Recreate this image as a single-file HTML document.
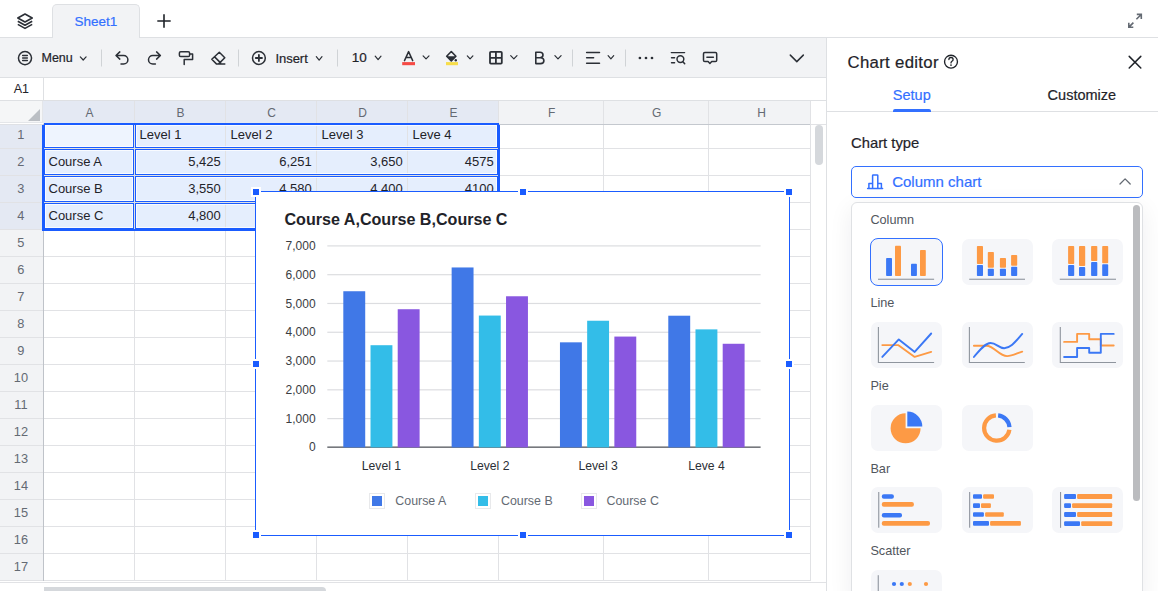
<!DOCTYPE html>
<html><head><meta charset="utf-8"><title>Sheet</title>
<style>
html,body{margin:0;padding:0;}
body{width:1158px;height:591px;overflow:hidden;position:relative;background:#fff;font-family:"Liberation Sans", sans-serif;}
div,svg{box-sizing:border-box;}
</style></head><body>
<div style="position:absolute;left:0px;top:37px;width:1158px;height:1px;background:#dee0e3"></div><svg style="position:absolute;left:15px;top:11px;" width="20" height="20" viewBox="0 0 20 20"><g fill="none" stroke="#2b2f36" stroke-width="1.6" stroke-linejoin="round"><path d="M10 3 L17.2 7 L10 11 L2.8 7 Z"/><path d="M2.8 10.2 L10 14.2 L17.2 10.2"/><path d="M2.8 13.4 L10 17.4 L17.2 13.4"/></g></svg><div style="position:absolute;left:52px;top:4px;width:88px;height:35px;background:#f2f3f5;border:1px solid #dee0e3;border-bottom:none;border-radius:5px 5px 0 0"></div><div style="position:absolute;left:74.5px;top:15.17px;font-size:13.5px;line-height:13.5px;color:#3370ff;font-weight:normal;white-space:nowrap;-webkit-text-stroke:0.2px currentColor;">Sheet1</div><svg style="position:absolute;left:155px;top:12px;" width="18" height="18" viewBox="0 0 18 18"><g stroke="#1f2329" stroke-width="1.6"><path d="M9 2.3 V15.7 M2.3 9 H15.7"/></g></svg><svg style="position:absolute;left:1126px;top:12px;" width="18" height="18" viewBox="0 0 18 18"><g fill="none" stroke="#646a73" stroke-width="1.6"><path d="M10.4 7.3 L15.2 2.5 M10.8 2.4 H15.3 V6.9"/><path d="M7.4 10.6 L2.9 15.1 M2.8 10.7 V15.2 H7.3"/></g></svg><div style="position:absolute;left:0px;top:38px;width:826px;height:39px;background:#f2f3f5"></div><div style="position:absolute;left:0px;top:77px;width:826px;height:1px;background:#dee0e3"></div><svg style="position:absolute;left:0;top:0" width="1158" height="591" viewBox="0 0 1158 591"><circle cx="25" cy="58.1" r="6.55" fill="none" stroke="#2b2f36" stroke-width="1.5"/><path d="M22.6 55.5 H27.4 M22.6 58 H27.4 M22.6 60.5 H27.4" fill="none" stroke="#2b2f36" stroke-width="1.3" stroke-linecap="round" stroke-linejoin="round" /><path d="M80.3 56.9 L83.19999999999999 60.0 L86.1 56.9" fill="none" stroke="#2b2f36" stroke-width="1.2" stroke-linecap="round" stroke-linejoin="round" /><rect x="101.0" y="49.5" width="1" height="17" fill="#d0d3d6"/><rect x="238.0" y="49.5" width="1" height="17" fill="#d0d3d6"/><rect x="337.0" y="49.5" width="1" height="17" fill="#d0d3d6"/><rect x="572.0" y="49.5" width="1" height="17" fill="#d0d3d6"/><rect x="625.0" y="49.5" width="1" height="17" fill="#d0d3d6"/><path d="M119.8 51.9 L116 55.5 L119.8 59.1 M116.3 55.5 H123.6 A4.3 4.3 0 0 1 123.6 64.1 H121" fill="none" stroke="#2b2f36" stroke-width="1.5" stroke-linecap="round" stroke-linejoin="round" /><path d="M156.6 51.9 L160.4 55.5 L156.6 59.1 M160.1 55.5 H152.8 A4.3 4.3 0 0 0 152.8 64.1 H155.4" fill="none" stroke="#2b2f36" stroke-width="1.5" stroke-linecap="round" stroke-linejoin="round" /><path d="M180.7 51.7 H188.3 Q189.6 51.7 189.6 53 V55.2 Q189.6 56.5 188.3 56.5 H180.7 Q179.4 56.5 179.4 55.2 V53 Q179.4 51.7 180.7 51.7 Z" fill="none" stroke="#2b2f36" stroke-width="1.5" stroke-linecap="round" stroke-linejoin="round" /><path d="M189.6 54 H192.6 V59.4 H184.2 V64.6" fill="none" stroke="#2b2f36" stroke-width="1.5" stroke-linecap="round" stroke-linejoin="round" stroke-linecap="butt"/><path d="M219.3 52.2 L224.8 57.7 L218.4 64.1 H216.6 L211.8 59.3 Z M214.6 56.9 L220.6 62.9 M218.4 64.1 H224.8" fill="none" stroke="#2b2f36" stroke-width="1.5" stroke-linecap="round" stroke-linejoin="round" /><circle cx="258.9" cy="58" r="6.4" fill="none" stroke="#2b2f36" stroke-width="1.5"/><path d="M255.8 58 H262 M258.9 54.9 V61.1" fill="none" stroke="#2b2f36" stroke-width="1.8" stroke-linecap="round" stroke-linejoin="round" stroke-linecap="butt"/><path d="M316.3 56.699999999999996 L319.15 60.1 L322.0 56.699999999999996" fill="none" stroke="#2b2f36" stroke-width="1.2" stroke-linecap="round" stroke-linejoin="round" /><path d="M375.2 56.199999999999996 L378.1 59.6 L381.0 56.199999999999996" fill="none" stroke="#2b2f36" stroke-width="1.2" stroke-linecap="round" stroke-linejoin="round" /><path d="M404.5 60.6 L408.6 51.6 L412.7 60.6 M405.9 57.5 H411.3" fill="none" stroke="#2b2f36" stroke-width="1.5" stroke-linecap="round" stroke-linejoin="round" stroke-linecap="butt"/><rect x="402.2" y="62.1" width="12.8" height="3.1" fill="#f54a45"/><path d="M423.1 55.9 L426.05 58.9 L429.0 55.9" fill="none" stroke="#2b2f36" stroke-width="1.2" stroke-linecap="round" stroke-linejoin="round" /><path d="M451.3 51.5 L455.9 56.3 L451.3 61 L446.7 56.3 Z" fill="none" stroke="#2b2f36" stroke-width="1.6" stroke-linecap="round" stroke-linejoin="round" /><path d="M446.7 56.3 L455.9 56.3 L451.3 61 Z" fill="#2b2f36"/><circle cx="455.8" cy="60.2" r="1.2" fill="#2b2f36"/><rect x="446" y="62.1" width="12" height="3.1" fill="#f7dd4a"/><path d="M467.3 55.9 L470.1 58.9 L472.9 55.9" fill="none" stroke="#2b2f36" stroke-width="1.2" stroke-linecap="round" stroke-linejoin="round" /><path d="M490.9 51.9 H500.9 Q501.8 51.9 501.8 52.8 V62.8 Q501.8 63.7 500.9 63.7 H490.9 Q490 63.7 490 62.8 V52.8 Q490 51.9 490.9 51.9 Z M495.9 51.9 V63.7 M490 57.8 H501.8" fill="none" stroke="#2b2f36" stroke-width="1.8" stroke-linecap="round" stroke-linejoin="round" /><path d="M510.7 55.699999999999996 L513.85 58.9 L517.0 55.699999999999996" fill="none" stroke="#2b2f36" stroke-width="1.2" stroke-linecap="round" stroke-linejoin="round" /><path d="M535.8 52.3 H540 Q543 52.3 543 55.1 Q543 57.7 540 57.7 H535.8 Z M535.8 57.7 H540.5 Q543.9 57.7 543.9 60.7 Q543.9 63.6 540.5 63.6 H535.8 Z" fill="none" stroke="#2b2f36" stroke-width="1.6" stroke-linecap="round" stroke-linejoin="round" /><path d="M554.9 55.699999999999996 L558.0 58.9 L561.1 55.699999999999996" fill="none" stroke="#2b2f36" stroke-width="1.2" stroke-linecap="round" stroke-linejoin="round" /><path d="M586.6 52.5 H599.5 M586.6 57.8 H593.6 M586.6 63.2 H599.5" fill="none" stroke="#2b2f36" stroke-width="1.5" stroke-linecap="round" stroke-linejoin="round" stroke-linecap="butt"/><path d="M608.1 55.699999999999996 L610.9000000000001 58.9 L613.7 55.699999999999996" fill="none" stroke="#2b2f36" stroke-width="1.2" stroke-linecap="round" stroke-linejoin="round" /><circle cx="639.9" cy="58" r="1.35" fill="#2b2f36"/><circle cx="646" cy="58" r="1.35" fill="#2b2f36"/><circle cx="652" cy="58" r="1.35" fill="#2b2f36"/><path d="M671.3 52.6 H684.6 M671.5 57.8 H674.6 M671.5 62.8 H674.6" fill="none" stroke="#2b2f36" stroke-width="1.4" stroke-linecap="round" stroke-linejoin="round" stroke-linecap="butt"/><circle cx="680.4" cy="59.1" r="3.4" fill="none" stroke="#2b2f36" stroke-width="1.5"/><path d="M682.9 61.7 L684.7 63.8" fill="none" stroke="#2b2f36" stroke-width="1.5" stroke-linecap="round" stroke-linejoin="round" /><path d="M704.8 52.4 H715.4 Q716.7 52.4 716.7 53.7 V60.2 Q716.7 61.5 715.4 61.5 H711.7 L709.9 63.4 L708.1 61.5 H704.8 Q703.5 61.5 703.5 60.2 V53.7 Q703.5 52.4 704.8 52.4 Z M706.9 57.2 H713.4" fill="none" stroke="#2b2f36" stroke-width="1.5" stroke-linecap="round" stroke-linejoin="round" /><path d="M790.3 55.1 L796.8 61.6 L803.3 55.1" fill="none" stroke="#2b2f36" stroke-width="1.5" stroke-linecap="round" stroke-linejoin="round" /></svg><div style="position:absolute;left:41.5px;top:52.22px;font-size:12.5px;line-height:12.5px;color:#1f2329;font-weight:normal;white-space:nowrap;-webkit-text-stroke:0.2px currentColor;">Menu</div><div style="position:absolute;left:275.5px;top:51.50px;font-size:13px;line-height:13px;color:#1f2329;font-weight:normal;white-space:nowrap;letter-spacing:-0.05px;-webkit-text-stroke:0.2px currentColor;">Insert</div><div style="position:absolute;left:351.8px;top:51.37px;font-size:13.5px;line-height:13.5px;color:#1f2329;font-weight:normal;white-space:nowrap;-webkit-text-stroke:0.2px currentColor;">10</div><div style="position:absolute;left:13.7px;top:83.02px;font-size:12.5px;line-height:12.5px;color:#1f2329;font-weight:normal;white-space:nowrap;">A1</div><div style="position:absolute;left:43px;top:78px;width:1px;height:22px;background:#dee0e3"></div><div style="position:absolute;left:0px;top:100px;width:826px;height:1px;background:#dee0e3"></div><div style="position:absolute;left:0px;top:101px;width:43px;height:22px;background:#f5f6f7"></div><div style="position:absolute;left:43px;top:101px;width:455px;height:23px;background:#e4e9f3"></div><div style="position:absolute;left:498px;top:101px;width:312px;height:23px;background:#f2f3f5"></div><div style="position:absolute;left:0px;top:125px;width:43px;height:104px;background:#e4e9f3"></div><div style="position:absolute;left:0px;top:229px;width:43px;height:362px;background:#f2f3f5"></div><svg style="position:absolute;left:26px;top:107px;" width="16" height="16" viewBox="0 0 16 16"><path d="M14 2 V14 H2 Z" fill="#bbbfc4"/></svg><div style="position:absolute;left:42px;top:101px;width:1px;height:22px;background:#e4e6e9"></div><div style="position:absolute;left:0px;top:122px;width:43px;height:1px;background:#e4e6e9"></div><div style="position:absolute;left:43px;top:124px;width:455px;height:105px;background:#e5eefd"></div><div style="position:absolute;left:43px;top:124px;width:91px;height:24px;background:#eef4fe"></div><div style="position:absolute;left:134px;top:101px;width:1px;height:23px;background:#e1e2e5"></div><div style="position:absolute;left:225px;top:101px;width:1px;height:23px;background:#e1e2e5"></div><div style="position:absolute;left:316px;top:101px;width:1px;height:23px;background:#e1e2e5"></div><div style="position:absolute;left:407px;top:101px;width:1px;height:23px;background:#e1e2e5"></div><div style="position:absolute;left:498px;top:101px;width:1px;height:23px;background:#e1e2e5"></div><div style="position:absolute;left:603px;top:101px;width:1px;height:23px;background:#e1e2e5"></div><div style="position:absolute;left:708px;top:101px;width:1px;height:23px;background:#e1e2e5"></div><div style="position:absolute;left:134px;top:124px;width:1px;height:456px;background:#e1e2e5"></div><div style="position:absolute;left:225px;top:124px;width:1px;height:456px;background:#e1e2e5"></div><div style="position:absolute;left:316px;top:124px;width:1px;height:456px;background:#e1e2e5"></div><div style="position:absolute;left:407px;top:124px;width:1px;height:456px;background:#e1e2e5"></div><div style="position:absolute;left:498px;top:124px;width:1px;height:456px;background:#e1e2e5"></div><div style="position:absolute;left:603px;top:124px;width:1px;height:456px;background:#e1e2e5"></div><div style="position:absolute;left:708px;top:124px;width:1px;height:456px;background:#e1e2e5"></div><div style="position:absolute;left:810px;top:124px;width:1px;height:456px;background:#e1e2e5"></div><div style="position:absolute;left:0px;top:148px;width:810px;height:1px;background:#e1e2e5"></div><div style="position:absolute;left:0px;top:175px;width:810px;height:1px;background:#e1e2e5"></div><div style="position:absolute;left:0px;top:202px;width:810px;height:1px;background:#e1e2e5"></div><div style="position:absolute;left:0px;top:229px;width:810px;height:1px;background:#e1e2e5"></div><div style="position:absolute;left:0px;top:256px;width:810px;height:1px;background:#e1e2e5"></div><div style="position:absolute;left:0px;top:283px;width:810px;height:1px;background:#e1e2e5"></div><div style="position:absolute;left:0px;top:310px;width:810px;height:1px;background:#e1e2e5"></div><div style="position:absolute;left:0px;top:337px;width:810px;height:1px;background:#e1e2e5"></div><div style="position:absolute;left:0px;top:364px;width:810px;height:1px;background:#e1e2e5"></div><div style="position:absolute;left:0px;top:391px;width:810px;height:1px;background:#e1e2e5"></div><div style="position:absolute;left:0px;top:418px;width:810px;height:1px;background:#e1e2e5"></div><div style="position:absolute;left:0px;top:445px;width:810px;height:1px;background:#e1e2e5"></div><div style="position:absolute;left:0px;top:472px;width:810px;height:1px;background:#e1e2e5"></div><div style="position:absolute;left:0px;top:499px;width:810px;height:1px;background:#e1e2e5"></div><div style="position:absolute;left:0px;top:526px;width:810px;height:1px;background:#e1e2e5"></div><div style="position:absolute;left:0px;top:553px;width:810px;height:1px;background:#e1e2e5"></div><div style="position:absolute;left:0px;top:580px;width:810px;height:1px;background:#e1e2e5"></div><div style="position:absolute;left:0px;top:124px;width:43px;height:1px;background:#dfe1e5"></div><div style="position:absolute;left:43px;top:124px;width:767px;height:1px;background:#c4c8ce"></div><div style="position:absolute;left:43px;top:124px;width:1px;height:467px;background:#bfc3c9"></div><div style="position:absolute;left:-10.400000000000006px;width:200px;text-align:center;top:107.44px;font-size:12px;line-height:12px;color:#646a73;font-weight:normal;white-space:nowrap;">A</div><div style="position:absolute;left:80.6px;width:200px;text-align:center;top:107.44px;font-size:12px;line-height:12px;color:#646a73;font-weight:normal;white-space:nowrap;">B</div><div style="position:absolute;left:171.60000000000002px;width:200px;text-align:center;top:107.44px;font-size:12px;line-height:12px;color:#646a73;font-weight:normal;white-space:nowrap;">C</div><div style="position:absolute;left:262.6px;width:200px;text-align:center;top:107.44px;font-size:12px;line-height:12px;color:#646a73;font-weight:normal;white-space:nowrap;">D</div><div style="position:absolute;left:353.6px;width:200px;text-align:center;top:107.44px;font-size:12px;line-height:12px;color:#646a73;font-weight:normal;white-space:nowrap;">E</div><div style="position:absolute;left:451.6px;width:200px;text-align:center;top:107.44px;font-size:12px;line-height:12px;color:#646a73;font-weight:normal;white-space:nowrap;">F</div><div style="position:absolute;left:556.6px;width:200px;text-align:center;top:107.44px;font-size:12px;line-height:12px;color:#646a73;font-weight:normal;white-space:nowrap;">G</div><div style="position:absolute;left:661.6px;width:200px;text-align:center;top:107.44px;font-size:12px;line-height:12px;color:#646a73;font-weight:normal;white-space:nowrap;">H</div><div style="position:absolute;left:-79.1px;width:200px;text-align:center;top:128.96px;font-size:12.8px;line-height:12.8px;color:#646a73;font-weight:normal;white-space:nowrap;">1</div><div style="position:absolute;left:-79.1px;width:200px;text-align:center;top:155.96px;font-size:12.8px;line-height:12.8px;color:#646a73;font-weight:normal;white-space:nowrap;">2</div><div style="position:absolute;left:-79.1px;width:200px;text-align:center;top:182.96px;font-size:12.8px;line-height:12.8px;color:#646a73;font-weight:normal;white-space:nowrap;">3</div><div style="position:absolute;left:-79.1px;width:200px;text-align:center;top:209.96px;font-size:12.8px;line-height:12.8px;color:#646a73;font-weight:normal;white-space:nowrap;">4</div><div style="position:absolute;left:-79.1px;width:200px;text-align:center;top:236.96px;font-size:12.8px;line-height:12.8px;color:#646a73;font-weight:normal;white-space:nowrap;">5</div><div style="position:absolute;left:-79.1px;width:200px;text-align:center;top:263.96px;font-size:12.8px;line-height:12.8px;color:#646a73;font-weight:normal;white-space:nowrap;">6</div><div style="position:absolute;left:-79.1px;width:200px;text-align:center;top:290.96px;font-size:12.8px;line-height:12.8px;color:#646a73;font-weight:normal;white-space:nowrap;">7</div><div style="position:absolute;left:-79.1px;width:200px;text-align:center;top:317.96px;font-size:12.8px;line-height:12.8px;color:#646a73;font-weight:normal;white-space:nowrap;">8</div><div style="position:absolute;left:-79.1px;width:200px;text-align:center;top:344.96px;font-size:12.8px;line-height:12.8px;color:#646a73;font-weight:normal;white-space:nowrap;">9</div><div style="position:absolute;left:-79.1px;width:200px;text-align:center;top:371.96px;font-size:12.8px;line-height:12.8px;color:#646a73;font-weight:normal;white-space:nowrap;">10</div><div style="position:absolute;left:-79.1px;width:200px;text-align:center;top:398.96px;font-size:12.8px;line-height:12.8px;color:#646a73;font-weight:normal;white-space:nowrap;">11</div><div style="position:absolute;left:-79.1px;width:200px;text-align:center;top:425.96px;font-size:12.8px;line-height:12.8px;color:#646a73;font-weight:normal;white-space:nowrap;">12</div><div style="position:absolute;left:-79.1px;width:200px;text-align:center;top:452.96px;font-size:12.8px;line-height:12.8px;color:#646a73;font-weight:normal;white-space:nowrap;">13</div><div style="position:absolute;left:-79.1px;width:200px;text-align:center;top:479.96px;font-size:12.8px;line-height:12.8px;color:#646a73;font-weight:normal;white-space:nowrap;">14</div><div style="position:absolute;left:-79.1px;width:200px;text-align:center;top:506.96px;font-size:12.8px;line-height:12.8px;color:#646a73;font-weight:normal;white-space:nowrap;">15</div><div style="position:absolute;left:-79.1px;width:200px;text-align:center;top:533.96px;font-size:12.8px;line-height:12.8px;color:#646a73;font-weight:normal;white-space:nowrap;">16</div><div style="position:absolute;left:-79.1px;width:200px;text-align:center;top:560.96px;font-size:12.8px;line-height:12.8px;color:#646a73;font-weight:normal;white-space:nowrap;">17</div><div style="position:absolute;left:826px;top:38px;width:0px;height:0px;"></div><div style="position:absolute;left:810px;top:101px;width:16px;height:490px;background:#fff"></div><div style="position:absolute;left:810px;top:101px;width:1px;height:490px;background:#e1e2e5"></div><div style="position:absolute;left:810px;top:124px;width:16px;height:1px;background:#e1e2e5"></div><div style="position:absolute;left:815px;top:125px;width:8px;height:40px;background:#d5d8dc;border-radius:4px"></div><div style="position:absolute;left:0px;top:581px;width:826px;height:10px;background:#fff"></div><div style="position:absolute;left:0px;top:582px;width:826px;height:1px;background:#e1e2e5"></div><div style="position:absolute;left:44px;top:587px;width:282px;height:6px;background:#d5d8dc;border-radius:0 4px 0 0"></div><div style="position:absolute;left:139.5px;top:128.40px;font-size:13px;line-height:13px;color:#1f2329;font-weight:normal;white-space:nowrap;">Level 1</div><div style="position:absolute;left:230.5px;top:128.40px;font-size:13px;line-height:13px;color:#1f2329;font-weight:normal;white-space:nowrap;">Level 2</div><div style="position:absolute;left:321.5px;top:128.40px;font-size:13px;line-height:13px;color:#1f2329;font-weight:normal;white-space:nowrap;">Level 3</div><div style="position:absolute;left:412.5px;top:128.40px;font-size:13px;line-height:13px;color:#1f2329;font-weight:normal;white-space:nowrap;">Leve 4</div><div style="position:absolute;left:48.5px;top:155.40px;font-size:13px;line-height:13px;color:#1f2329;font-weight:normal;white-space:nowrap;">Course A</div><div style="position:absolute;right:937.3px;top:155.40px;font-size:13px;line-height:13px;color:#1f2329;font-weight:normal;white-space:nowrap;text-align:right;">5,425</div><div style="position:absolute;right:846.3px;top:155.40px;font-size:13px;line-height:13px;color:#1f2329;font-weight:normal;white-space:nowrap;text-align:right;">6,251</div><div style="position:absolute;right:755.3px;top:155.40px;font-size:13px;line-height:13px;color:#1f2329;font-weight:normal;white-space:nowrap;text-align:right;">3,650</div><div style="position:absolute;right:664.3px;top:155.40px;font-size:13px;line-height:13px;color:#1f2329;font-weight:normal;white-space:nowrap;text-align:right;">4575</div><div style="position:absolute;left:48.5px;top:182.40px;font-size:13px;line-height:13px;color:#1f2329;font-weight:normal;white-space:nowrap;">Course B</div><div style="position:absolute;right:937.3px;top:182.40px;font-size:13px;line-height:13px;color:#1f2329;font-weight:normal;white-space:nowrap;text-align:right;">3,550</div><div style="position:absolute;right:846.3px;top:182.40px;font-size:13px;line-height:13px;color:#1f2329;font-weight:normal;white-space:nowrap;text-align:right;">4,580</div><div style="position:absolute;right:755.3px;top:182.40px;font-size:13px;line-height:13px;color:#1f2329;font-weight:normal;white-space:nowrap;text-align:right;">4,400</div><div style="position:absolute;right:664.3px;top:182.40px;font-size:13px;line-height:13px;color:#1f2329;font-weight:normal;white-space:nowrap;text-align:right;">4100</div><div style="position:absolute;left:48.5px;top:209.40px;font-size:13px;line-height:13px;color:#1f2329;font-weight:normal;white-space:nowrap;">Course C</div><div style="position:absolute;right:937.3px;top:209.40px;font-size:13px;line-height:13px;color:#1f2329;font-weight:normal;white-space:nowrap;text-align:right;">4,800</div><div style="position:absolute;left:44px;top:124px;width:90px;height:24px;border:1px solid #1a5cff;"></div><div style="position:absolute;left:45px;top:125px;width:88px;height:22px;border:1px solid rgba(255,255,255,0.75);"></div><div style="position:absolute;left:135px;top:124px;width:363px;height:24px;border:1px solid #1a5cff;"></div><div style="position:absolute;left:136px;top:125px;width:361px;height:22px;border:1px solid rgba(255,255,255,0.75);"></div><div style="position:absolute;left:44px;top:149px;width:90px;height:26px;border:1px solid #1a5cff;"></div><div style="position:absolute;left:45px;top:150px;width:88px;height:24px;border:1px solid rgba(255,255,255,0.75);"></div><div style="position:absolute;left:135px;top:149px;width:363px;height:26px;border:1px solid #1a5cff;"></div><div style="position:absolute;left:136px;top:150px;width:361px;height:24px;border:1px solid rgba(255,255,255,0.75);"></div><div style="position:absolute;left:44px;top:176px;width:90px;height:26px;border:1px solid #1a5cff;"></div><div style="position:absolute;left:45px;top:177px;width:88px;height:24px;border:1px solid rgba(255,255,255,0.75);"></div><div style="position:absolute;left:135px;top:176px;width:363px;height:26px;border:1px solid #1a5cff;"></div><div style="position:absolute;left:136px;top:177px;width:361px;height:24px;border:1px solid rgba(255,255,255,0.75);"></div><div style="position:absolute;left:44px;top:203px;width:90px;height:26px;border:1px solid #1a5cff;"></div><div style="position:absolute;left:45px;top:204px;width:88px;height:24px;border:1px solid rgba(255,255,255,0.75);"></div><div style="position:absolute;left:135px;top:203px;width:363px;height:26px;border:1px solid #1a5cff;"></div><div style="position:absolute;left:136px;top:204px;width:361px;height:24px;border:1px solid rgba(255,255,255,0.75);"></div><div style="position:absolute;left:42px;top:125px;width:2px;height:106px;background:#1a5cff"></div><div style="position:absolute;left:44px;top:123px;width:455px;height:2px;background:#1a5cff"></div><div style="position:absolute;left:498px;top:125px;width:2px;height:106px;background:#1a5cff"></div><div style="position:absolute;left:42px;top:229px;width:458px;height:2px;background:#1a5cff"></div><div style="position:absolute;left:255px;top:191px;width:535px;height:345px;background:#fff;border:1px solid #1a5cff"></div><svg style="position:absolute;left:0;top:0" width="1158" height="591" viewBox="0 0 1158 591"><rect x="327.3" y="446.5" width="433.3" height="1.3" fill="#55585e"/><rect x="327.3" y="418.01" width="433.3" height="1.2" fill="#dcdde0"/><rect x="327.3" y="389.23" width="433.3" height="1.2" fill="#dcdde0"/><rect x="327.3" y="360.44" width="433.3" height="1.2" fill="#dcdde0"/><rect x="327.3" y="331.66" width="433.3" height="1.2" fill="#dcdde0"/><rect x="327.3" y="302.87" width="433.3" height="1.2" fill="#dcdde0"/><rect x="327.3" y="274.09" width="433.3" height="1.2" fill="#dcdde0"/><rect x="327.3" y="245.30" width="433.3" height="1.2" fill="#dcdde0"/><rect x="343.31" y="291.24" width="21.9" height="156.16" fill="#4078e7"/><rect x="370.51" y="345.21" width="21.9" height="102.19" fill="#33bde8"/><rect x="397.71" y="309.23" width="21.9" height="138.17" fill="#8957e0"/><rect x="451.64" y="267.46" width="21.9" height="179.94" fill="#4078e7"/><rect x="478.84" y="315.56" width="21.9" height="131.84" fill="#33bde8"/><rect x="506.04" y="296.27" width="21.9" height="151.12" fill="#8957e0"/><rect x="559.96" y="342.33" width="21.9" height="105.07" fill="#4078e7"/><rect x="587.16" y="320.74" width="21.9" height="126.66" fill="#33bde8"/><rect x="614.36" y="336.57" width="21.9" height="110.83" fill="#8957e0"/><rect x="668.29" y="315.71" width="21.9" height="131.69" fill="#4078e7"/><rect x="695.49" y="329.38" width="21.9" height="118.02" fill="#33bde8"/><rect x="722.69" y="343.77" width="21.9" height="103.63" fill="#8957e0"/></svg><div style="position:absolute;left:284.5px;top:211.17px;font-size:16.1px;line-height:16.1px;color:#1f2329;font-weight:bold;white-space:nowrap;">Course A,Course B,Course C</div><div style="position:absolute;right:842.4px;top:441.44px;font-size:12px;line-height:12px;color:#3a3d42;font-weight:normal;white-space:nowrap;text-align:right;">0</div><div style="position:absolute;right:842.4px;top:412.66px;font-size:12px;line-height:12px;color:#3a3d42;font-weight:normal;white-space:nowrap;text-align:right;">1,000</div><div style="position:absolute;right:842.4px;top:383.87px;font-size:12px;line-height:12px;color:#3a3d42;font-weight:normal;white-space:nowrap;text-align:right;">2,000</div><div style="position:absolute;right:842.4px;top:355.08px;font-size:12px;line-height:12px;color:#3a3d42;font-weight:normal;white-space:nowrap;text-align:right;">3,000</div><div style="position:absolute;right:842.4px;top:326.30px;font-size:12px;line-height:12px;color:#3a3d42;font-weight:normal;white-space:nowrap;text-align:right;">4,000</div><div style="position:absolute;right:842.4px;top:297.51px;font-size:12px;line-height:12px;color:#3a3d42;font-weight:normal;white-space:nowrap;text-align:right;">5,000</div><div style="position:absolute;right:842.4px;top:268.73px;font-size:12px;line-height:12px;color:#3a3d42;font-weight:normal;white-space:nowrap;text-align:right;">6,000</div><div style="position:absolute;right:842.4px;top:239.94px;font-size:12px;line-height:12px;color:#3a3d42;font-weight:normal;white-space:nowrap;text-align:right;">7,000</div><div style="position:absolute;left:281.46250000000003px;width:200px;text-align:center;top:460.07px;font-size:12.2px;line-height:12.2px;color:#2b2f36;font-weight:normal;white-space:nowrap;">Level 1</div><div style="position:absolute;left:389.7875px;width:200px;text-align:center;top:460.07px;font-size:12.2px;line-height:12.2px;color:#2b2f36;font-weight:normal;white-space:nowrap;">Level 2</div><div style="position:absolute;left:498.11249999999995px;width:200px;text-align:center;top:460.07px;font-size:12.2px;line-height:12.2px;color:#2b2f36;font-weight:normal;white-space:nowrap;">Level 3</div><div style="position:absolute;left:606.4375px;width:200px;text-align:center;top:460.07px;font-size:12.2px;line-height:12.2px;color:#2b2f36;font-weight:normal;white-space:nowrap;">Leve 4</div><div style="position:absolute;left:369.3px;top:493px;width:16px;height:16px;border:1px solid #e8e9eb;background:#fff"></div><div style="position:absolute;left:372.3px;top:496px;width:10px;height:10px;background:#4078e7"></div><div style="position:absolute;left:395.3px;top:495.00px;font-size:12.4px;line-height:12.4px;color:#646a73;font-weight:normal;white-space:nowrap;">Course A</div><div style="position:absolute;left:475px;top:493px;width:16px;height:16px;border:1px solid #e8e9eb;background:#fff"></div><div style="position:absolute;left:478px;top:496px;width:10px;height:10px;background:#33bde8"></div><div style="position:absolute;left:501px;top:495.00px;font-size:12.4px;line-height:12.4px;color:#646a73;font-weight:normal;white-space:nowrap;">Course B</div><div style="position:absolute;left:580.5px;top:493px;width:16px;height:16px;border:1px solid #e8e9eb;background:#fff"></div><div style="position:absolute;left:583.5px;top:496px;width:10px;height:10px;background:#8957e0"></div><div style="position:absolute;left:606.5px;top:495.00px;font-size:12.4px;line-height:12.4px;color:#646a73;font-weight:normal;white-space:nowrap;">Course C</div><div style="position:absolute;left:251px;top:187px;width:10px;height:10px;background:#fff"></div><div style="position:absolute;left:253px;top:189px;width:6px;height:6px;background:#1a5cff"></div><div style="position:absolute;left:251px;top:359px;width:10px;height:10px;background:#fff"></div><div style="position:absolute;left:253px;top:361px;width:6px;height:6px;background:#1a5cff"></div><div style="position:absolute;left:251px;top:530px;width:10px;height:10px;background:#fff"></div><div style="position:absolute;left:253px;top:532px;width:6px;height:6px;background:#1a5cff"></div><div style="position:absolute;left:518px;top:187px;width:10px;height:10px;background:#fff"></div><div style="position:absolute;left:520px;top:189px;width:6px;height:6px;background:#1a5cff"></div><div style="position:absolute;left:518px;top:530px;width:10px;height:10px;background:#fff"></div><div style="position:absolute;left:520px;top:532px;width:6px;height:6px;background:#1a5cff"></div><div style="position:absolute;left:784px;top:187px;width:10px;height:10px;background:#fff"></div><div style="position:absolute;left:786px;top:189px;width:6px;height:6px;background:#1a5cff"></div><div style="position:absolute;left:784px;top:359px;width:10px;height:10px;background:#fff"></div><div style="position:absolute;left:786px;top:361px;width:6px;height:6px;background:#1a5cff"></div><div style="position:absolute;left:784px;top:530px;width:10px;height:10px;background:#fff"></div><div style="position:absolute;left:786px;top:532px;width:6px;height:6px;background:#1a5cff"></div><div style="position:absolute;left:826px;top:38px;width:1px;height:553px;background:#dee0e3"></div><div style="position:absolute;left:847.5px;top:55.18px;font-size:16.8px;line-height:16.8px;color:#1f2329;font-weight:normal;white-space:nowrap;letter-spacing:0.3px;-webkit-text-stroke:0.2px currentColor;">Chart editor</div><div style="position:absolute;left:892.8px;top:88.23px;font-size:14.5px;line-height:14.5px;color:#3370ff;font-weight:normal;white-space:nowrap;-webkit-text-stroke:0.2px currentColor;">Setup</div><div style="position:absolute;left:1047.6px;top:88.23px;font-size:14.5px;line-height:14.5px;color:#1f2329;font-weight:normal;white-space:nowrap;-webkit-text-stroke:0.2px currentColor;">Customize</div><div style="position:absolute;left:827px;top:111px;width:331px;height:1px;background:#dee0e3"></div><div style="position:absolute;left:892.5px;top:109px;width:38.5px;height:3px;background:#3370ff;border-radius:2px 2px 0 0"></div><div style="position:absolute;left:851px;top:136.37px;font-size:14.8px;line-height:14.8px;color:#1f2329;font-weight:normal;white-space:nowrap;-webkit-text-stroke:0.2px currentColor;">Chart type</div><div style="position:absolute;left:851px;top:166px;width:292px;height:32px;border:1px solid #3370ff;border-radius:5px;background:#fff"></div><div style="position:absolute;left:892.2px;top:174.20px;font-size:15px;line-height:15px;color:#3370ff;font-weight:normal;white-space:nowrap;-webkit-text-stroke:0.2px currentColor;">Column chart</div><div style="position:absolute;left:851px;top:202px;width:292px;height:400px;border:1px solid #dfe1e4;border-radius:6px;background:#fff;box-shadow:0 6px 24px rgba(31,35,41,0.07)"></div><div style="position:absolute;left:1133px;top:205px;width:7px;height:296px;background:#bbbcbf;border-radius:3.5px"></div><div style="position:absolute;left:870.4px;top:213.95px;font-size:12.7px;line-height:12.7px;color:#51565d;font-weight:normal;white-space:nowrap;">Column</div><div style="position:absolute;left:870.4px;top:297.15px;font-size:12.7px;line-height:12.7px;color:#51565d;font-weight:normal;white-space:nowrap;">Line</div><div style="position:absolute;left:870.4px;top:379.95px;font-size:12.7px;line-height:12.7px;color:#51565d;font-weight:normal;white-space:nowrap;">Pie</div><div style="position:absolute;left:870.4px;top:463.05px;font-size:12.7px;line-height:12.7px;color:#51565d;font-weight:normal;white-space:nowrap;">Bar</div><div style="position:absolute;left:870.4px;top:544.95px;font-size:12.7px;line-height:12.7px;color:#51565d;font-weight:normal;white-space:nowrap;">Scatter</div><div style="position:absolute;left:871px;top:239px;width:71px;height:46px;background:#f5f6f9;border-radius:7px"></div><div style="position:absolute;left:962px;top:239px;width:71px;height:46px;background:#f5f6f9;border-radius:7px"></div><div style="position:absolute;left:1052px;top:239px;width:71px;height:46px;background:#f5f6f9;border-radius:7px"></div><div style="position:absolute;left:871px;top:322px;width:71px;height:46px;background:#f5f6f9;border-radius:7px"></div><div style="position:absolute;left:962px;top:322px;width:71px;height:46px;background:#f5f6f9;border-radius:7px"></div><div style="position:absolute;left:1052px;top:322px;width:71px;height:46px;background:#f5f6f9;border-radius:7px"></div><div style="position:absolute;left:871px;top:405px;width:71px;height:46px;background:#f5f6f9;border-radius:7px"></div><div style="position:absolute;left:962px;top:405px;width:71px;height:46px;background:#f5f6f9;border-radius:7px"></div><div style="position:absolute;left:871px;top:487px;width:71px;height:46px;background:#f5f6f9;border-radius:7px"></div><div style="position:absolute;left:962px;top:487px;width:71px;height:46px;background:#f5f6f9;border-radius:7px"></div><div style="position:absolute;left:1052px;top:487px;width:71px;height:46px;background:#f5f6f9;border-radius:7px"></div><div style="position:absolute;left:871px;top:570px;width:71px;height:46px;background:#f5f6f9;border-radius:7px"></div><div style="position:absolute;left:870px;top:238px;width:73px;height:48px;border:1px solid #3370ff;border-radius:8px;background:#f5f6f9"></div><svg style="position:absolute;left:0;top:0" width="1158" height="591" viewBox="0 0 1158 591"><circle cx="951" cy="61.7" r="6.45" fill="none" stroke="#1f2329" stroke-width="1.35"/><path d="M948.9 59.6 Q948.9 57.5 951 57.5 Q953.1 57.5 953.1 59.4 Q953.1 60.6 951.9 61.3 Q951 61.8 951 62.9" fill="none" stroke="#1f2329" stroke-width="1.3" stroke-linecap="round" stroke-linejoin="round" /><circle cx="951" cy="65.1" r="0.85" fill="#1f2329"/><path d="M1129.2 56.4 L1140.8 68 M1140.8 56.4 L1129.2 68" fill="none" stroke="#1f2329" stroke-width="1.5" stroke-linecap="round" stroke-linejoin="round" /><path d="M867.6 188.6 H882.6 M868.9 188.6 V183.6 H872.6 V188.6 M872.6 183.6 V175.6 Q872.6 175 873.2 175 H877.2 Q877.8 175 877.8 175.6 V188.6 M877.8 183.6 H881.4 V188.6" fill="none" stroke="#3370ff" stroke-width="1.5" stroke-linecap="round" stroke-linejoin="round" stroke-linecap="butt"/><path d="M1120 184 L1125.1 178.9 L1130.2 184" fill="none" stroke="#646a73" stroke-width="1.3" stroke-linecap="round" stroke-linejoin="round" /><rect x="886.1" y="257.9" width="5.90" height="18.10" rx="0.8" fill="#3b78f5"/><rect x="895" y="245.7" width="6.00" height="30.30" rx="0.8" fill="#fd9a45"/><rect x="911" y="263.8" width="5.90" height="12.20" rx="0.8" fill="#3b78f5"/><rect x="920" y="250" width="5.80" height="26.00" rx="0.8" fill="#fd9a45"/><rect x="878" y="278.7" width="56.10" height="1.10" rx="0" fill="#8f959e"/><rect x="976.9" y="245.9" width="6.10" height="18.10" rx="0.8" fill="#fd9a45"/><rect x="976.9" y="265.0" width="6.10" height="11.00" rx="0.8" fill="#3b78f5"/><rect x="987.8" y="251.9" width="6.10" height="15.90" rx="0.8" fill="#fd9a45"/><rect x="987.8" y="268.8" width="6.10" height="7.20" rx="0.8" fill="#3b78f5"/><rect x="999.9" y="258" width="6.10" height="9.80" rx="0.8" fill="#fd9a45"/><rect x="999.9" y="268.8" width="6.10" height="7.20" rx="0.8" fill="#3b78f5"/><rect x="1011.1" y="255" width="6.10" height="10.80" rx="0.8" fill="#fd9a45"/><rect x="1011.1" y="266.8" width="6.10" height="9.20" rx="0.8" fill="#3b78f5"/><rect x="969.2" y="278.7" width="55.80" height="1.10" rx="0" fill="#8f959e"/><rect x="1068.1" y="245.9" width="6.10" height="18.10" rx="0.8" fill="#fd9a45"/><rect x="1068.1" y="265.0" width="6.10" height="11.00" rx="0.8" fill="#3b78f5"/><rect x="1079" y="245.9" width="6.20" height="20.20" rx="0.8" fill="#fd9a45"/><rect x="1079" y="267.1" width="6.20" height="8.90" rx="0.8" fill="#3b78f5"/><rect x="1091.1" y="245.9" width="6.20" height="15.20" rx="0.8" fill="#fd9a45"/><rect x="1091.1" y="262.1" width="6.20" height="13.90" rx="0.8" fill="#3b78f5"/><rect x="1102.2" y="245.9" width="6.00" height="17.30" rx="0.8" fill="#fd9a45"/><rect x="1102.2" y="264.2" width="6.00" height="11.80" rx="0.8" fill="#3b78f5"/><rect x="1059.8" y="278.7" width="56.20" height="1.10" rx="0" fill="#8f959e"/><path d="M878.4 327.1 V362.5 H934.1" fill="none" stroke="#8f959e" stroke-width="1.1"/><path d="M882.3 345.1 L898.1 345.1 L914.7 356.9 L931.2 351.9" fill="none" stroke="#fd9a45" stroke-width="1.9" stroke-linecap="round" stroke-linejoin="round" /><path d="M882.3 356.9 L898.8 339.4 L914.7 351.9 L931.2 333.5" fill="none" stroke="#3b78f5" stroke-width="1.9" stroke-linecap="round" stroke-linejoin="round" /><path d="M969.4 327.1 V362.5 H1024.8" fill="none" stroke="#8f959e" stroke-width="1.1"/><path d="M973.9 345.7 L986.5 345.7 C994 345.7 999 356.1 1007.1 356.1 C1012 356.1 1017 353.2 1022.2 351.6" fill="none" stroke="#fd9a45" stroke-width="1.9" stroke-linecap="round" stroke-linejoin="round" /><path d="M973.9 357 C980 350 985 343 990.5 343 C996.5 343 998.5 348.2 1004.2 348.2 C1011 348.2 1016 341 1022.2 333.9" fill="none" stroke="#3b78f5" stroke-width="1.9" stroke-linecap="round" stroke-linejoin="round" /><path d="M1060.3 327.1 V362.5 H1116" fill="none" stroke="#8f959e" stroke-width="1.1"/><path d="M1064.1 341.9 H1077.1 V333.9 H1089.2 V339.2 H1100.8 V345.5 H1113.7" fill="none" stroke="#fd9a45" stroke-width="1.9" stroke-linecap="round" stroke-linejoin="round" stroke-linecap="butt" stroke-linejoin="miter"/><path d="M1064.1 357 H1077.1 V348 H1089.2 V352.8 H1100.8 V333.9 H1113.7" fill="none" stroke="#3b78f5" stroke-width="1.9" stroke-linecap="round" stroke-linejoin="round" stroke-linecap="butt" stroke-linejoin="miter"/><path d="M905.6 428.3 V413.3 A15 15 0 1 0 920.6 428.3 Z" fill="#fd9a45"/><path d="M907.3 426.6 V411.6 A15 15 0 0 1 922.3 426.6 Z" fill="#3b78f5"/><path d="M998.13 415.37 A12.7 12.7 0 0 1 1009.47 427.11" fill="none" stroke="#3b78f5" stroke-width="4.2"/><path d="M1009.38 429.77 A12.7 12.7 0 1 1 995.91 415.33" fill="none" stroke="#fd9a45" stroke-width="4.2"/><rect x="878.2" y="492" width="1.1" height="35.7" fill="#8f959e"/><rect x="881.8" y="494.2" width="12.10" height="4.60" rx="2" fill="#3b78f5"/><rect x="881.8" y="502.1" width="32.10" height="4.70" rx="2" fill="#fd9a45"/><rect x="881.8" y="513" width="20.20" height="4.60" rx="2" fill="#3b78f5"/><rect x="881.8" y="521" width="48.20" height="4.70" rx="2" fill="#fd9a45"/><rect x="969.1" y="492" width="1.1" height="35.7" fill="#8f959e"/><rect x="973" y="494.2" width="9.00" height="4.60" rx="1" fill="#3b78f5"/><rect x="983.1" y="494.2" width="10.90" height="4.60" rx="1" fill="#fd9a45"/><rect x="973" y="503.2" width="7.00" height="4.70" rx="1" fill="#3b78f5"/><rect x="981" y="503.2" width="9.90" height="4.70" rx="1" fill="#fd9a45"/><rect x="973" y="512.2" width="10.90" height="4.60" rx="1" fill="#3b78f5"/><rect x="985.1" y="512.2" width="18.70" height="4.60" rx="1" fill="#fd9a45"/><rect x="973" y="521" width="16.00" height="4.70" rx="1" fill="#3b78f5"/><rect x="990.1" y="521" width="30.80" height="4.70" rx="1" fill="#fd9a45"/><rect x="1060" y="492" width="1.1" height="35.8" fill="#8f959e"/><rect x="1064.1" y="494" width="11.90" height="4.90" rx="1" fill="#3b78f5"/><rect x="1077.1" y="494" width="35.10" height="4.90" rx="1" fill="#fd9a45"/><rect x="1064.1" y="503.2" width="6.90" height="4.80" rx="1" fill="#3b78f5"/><rect x="1072.1" y="503.2" width="40.10" height="4.80" rx="1" fill="#fd9a45"/><rect x="1064.1" y="512.1" width="11.90" height="4.90" rx="1" fill="#3b78f5"/><rect x="1077.1" y="512.1" width="35.10" height="4.90" rx="1" fill="#fd9a45"/><rect x="1064.1" y="521.2" width="15.90" height="4.70" rx="1" fill="#3b78f5"/><rect x="1081.2" y="521.2" width="31.00" height="4.70" rx="1" fill="#fd9a45"/><rect x="877.7" y="575.2" width="1.1" height="20" fill="#8f959e"/><circle cx="894" cy="584" r="2.1" fill="#3b78f5"/><circle cx="901.8" cy="584" r="2.1" fill="#3b78f5"/><circle cx="909.8" cy="584" r="2.1" fill="#fd9a45"/><circle cx="926" cy="584" r="2.1" fill="#fd9a45"/></svg></body></html>
